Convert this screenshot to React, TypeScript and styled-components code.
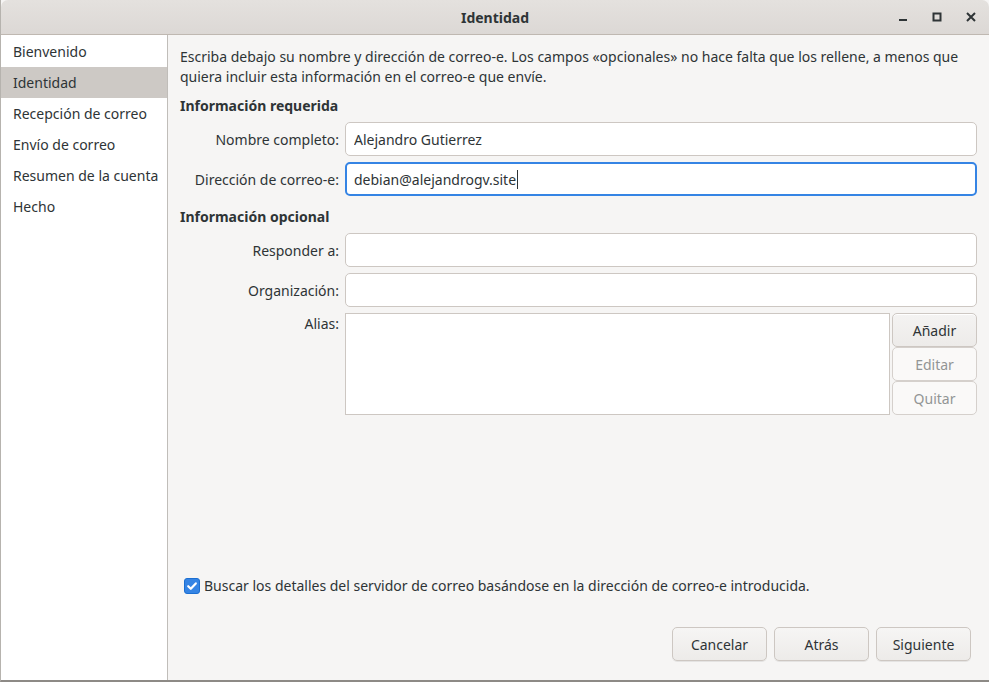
import React, { useState } from 'react';
import styled, { createGlobalStyle } from 'styled-components';

const steps = [
  'Bienvenido',
  'Identidad',
  'Recepción de correo',
  'Envío de correo',
  'Resumen de la cuenta',
  'Hecho',
];

const App = () => {
  const [checked, setChecked] = useState(true);

  return (
    <>
      <GlobalStyle />
      <Window>
        <TitleBar>
          <Title>Identidad</Title>
          <Controls>
            <Control aria-label='Minimizar'>
              <svg width='10' height='10' viewBox='0 0 10 10'>
                <rect x='1' y='7' width='8' height='2' fill='#2e3436' />
              </svg>
            </Control>
            <Control aria-label='Maximizar'>
              <svg width='10' height='10' viewBox='0 0 10 10'>
                <rect x='1.5' y='1.5' width='7' height='7' fill='none' stroke='#2e3436' strokeWidth='2' />
              </svg>
            </Control>
            <Control aria-label='Cerrar'>
              <svg width='10' height='10' viewBox='0 0 10 10'>
                <path d='M1 1 L9 9 M9 1 L1 9' stroke='#2e3436' strokeWidth='2' />
              </svg>
            </Control>
          </Controls>
        </TitleBar>
        <Body>
          <Sidebar>
            {steps.map((s) => (
              <Step key={s} $active={s === 'Identidad'}>
                {s}
              </Step>
            ))}
          </Sidebar>
          <Content>
            <Intro>
              Escriba debajo su nombre y dirección de correo-e. Los campos «opcionales» no hace falta que los rellene, a
              menos que quiera incluir esta información en el correo-e que envíe.
            </Intro>
            <Heading>Información requerida</Heading>
            <Form>
              <Label>Nombre completo:</Label>
              <Field defaultValue='Alejandro Gutierrez' />
              <Label>Dirección de correo-e:</Label>
              <CaretWrap>
                <Field $focused defaultValue='debian@alejandrogv.site' />
                <Caret />
              </CaretWrap>
            </Form>
            <Heading $gap={11}>Información opcional</Heading>
            <Form>
              <Label>Responder a:</Label>
              <Field />
              <Label>Organización:</Label>
              <Field />
              <Label $top>Alias:</Label>
              <AliasRow>
                <AliasList />
                <ButtonStack>
                  <StackButton>Añadir</StackButton>
                  <StackButton disabled>Editar</StackButton>
                  <StackButton disabled>Quitar</StackButton>
                </ButtonStack>
              </AliasRow>
            </Form>
            <Spacer />
            <CheckRow onClick={() => setChecked(!checked)}>
              <Box $checked={checked}>
                {checked && (
                  <svg width='12' height='12' viewBox='0 0 12 12'>
                    <path d='M2.2 6.2 L4.8 8.8 L9.8 3.4' fill='none' stroke='#fff' strokeWidth='2.2' strokeLinecap='round' strokeLinejoin='round' />
                  </svg>
                )}
              </Box>
              Buscar los detalles del servidor de correo basándose en la dirección de correo-e introducida.
            </CheckRow>
            <Footer>
              <Button>Cancelar</Button>
              <Button>Atrás</Button>
              <Button>Siguiente</Button>
            </Footer>
          </Content>
        </Body>
      </Window>
    </>
  );
};

export default App;

// styled
const GlobalStyle = createGlobalStyle`
  html, body {
    margin: 0;
    padding: 0;
    background: #f6f5f4;
  }
  body {
    font-family: 'Noto Sans', 'DejaVu Sans', sans-serif;
    font-size: 14px;
    color: #2e3436;
  }
`;

const Window = styled.div`
  width: 989px;
  height: 682px;
  display: flex;
  flex-direction: column;
  box-sizing: border-box;
  border-left: 1px solid #b6b3ae;
  border-bottom: 2px solid #8d8a86;
  background: #f6f5f4;
  overflow: hidden;
`;

const TitleBar = styled.div`
  height: 34px;
  flex: none;
  display: flex;
  align-items: center;
  justify-content: center;
  position: relative;
  background: linear-gradient(#e4e1de, #dcd8d5);
  border-bottom: 1px solid #bfb8b1;
  border-radius: 7px 7px 0 0;
`;

const Title = styled.div`
  font-weight: bold;
  font-size: 14px;
  color: #2e3436;
`;

const Controls = styled.div`
  position: absolute;
  right: 6px;
  top: 0;
  height: 34px;
  display: flex;
  align-items: center;
  gap: 10px;
`;

const Control = styled.div`
  width: 24px;
  height: 24px;
  display: flex;
  align-items: center;
  justify-content: center;
`;

const Body = styled.div`
  flex: 1;
  display: flex;
  min-height: 0;
`;

const Sidebar = styled.div`
  width: 166px;
  flex: none;
  padding-top: 1px;
  background: #fff;
  border-right: 1px solid #c0bdb9;
`;

const Step = styled.div<{ $active?: boolean }>`
  height: 31px;
  line-height: 31px;
  padding-left: 12px;
  white-space: nowrap;
  background: ${(p) => (p.$active ? '#cdc9c5' : 'transparent')};
`;

const Content = styled.div`
  flex: 1;
  display: flex;
  flex-direction: column;
  padding: 12px 12px 19px 12px;
  min-width: 0;
`;

const Intro = styled.p`
  margin: 0;
  line-height: 20px;
`;

const Heading = styled.div<{ $gap?: number }>`
  font-weight: bold;
  line-height: 20px;
  margin-top: ${(p) => p.$gap ?? 9}px;
  margin-bottom: 6px;
`;

const Form = styled.div`
  display: grid;
  grid-template-columns: 159px 1fr;
  column-gap: 6px;
  row-gap: 6px;
`;

const Label = styled.label<{ $top?: boolean }>`
  text-align: right;
  align-self: ${(p) => (p.$top ? 'start' : 'center')};
  padding-top: ${(p) => (p.$top ? '1px' : '0')};
  white-space: nowrap;
`;

const Field = styled.input<{ $focused?: boolean }>`
  width: 100%;
  height: 34px;
  box-sizing: border-box;
  font: inherit;
  color: #2e3436;
  background: #fff;
  border: ${(p) => (p.$focused ? '2px solid #3584e4' : '1px solid #cdc7c2')};
  border-radius: 5px;
  outline: none;
  padding: 0 8px 0 ${(p) => (p.$focused ? '7px' : '8px')};
`;

const CaretWrap = styled.div`
  position: relative;
  display: flex;
`;

const Caret = styled.span`
  position: absolute;
  left: 172px;
  top: 8px;
  width: 1px;
  height: 19px;
  background: #2e3436;
`;

const AliasRow = styled.div`
  display: flex;
  gap: 2px;
`;

const AliasList = styled.div`
  flex: 1;
  height: 102px;
  box-sizing: border-box;
  background: #fff;
  border: 1px solid #cdc7c2;
`;

const ButtonStack = styled.div`
  width: 85px;
  display: flex;
  flex-direction: column;
`;

const StackButton = styled.button`
  height: 34px;
  font: inherit;
  color: #2e3436;
  border: 1px solid #cdc7c2;
  border-radius: 5px;
  background: linear-gradient(#f4f3f2, #edebe9);
  box-shadow: inset 0 1px #fff;
  &:disabled {
    color: #929595;
    background: #faf9f8;
    box-shadow: none;
    border-color: #d5d0cc;
  }
`;

const Spacer = styled.div`
  flex: 1;
`;

const CheckRow = styled.div`
  display: flex;
  align-items: center;
  gap: 4px;
  padding-left: 4px;
  line-height: 20px;
  cursor: default;
`;

const Box = styled.div<{ $checked: boolean }>`
  width: 16px;
  height: 16px;
  box-sizing: border-box;
  border-radius: 3px;
  display: flex;
  align-items: center;
  justify-content: center;
  background: ${(p) => (p.$checked ? '#3584e4' : '#fff')};
  border: 1px solid ${(p) => (p.$checked ? '#1c6fd1' : '#cdc7c2')};
`;

const Footer = styled.div`
  display: flex;
  justify-content: flex-end;
  gap: 7px;
  margin-top: 31px;
  padding-right: 6px;
`;

const Button = styled.button`
  width: 95px;
  height: 34px;
  font: inherit;
  color: #2e3436;
  border: 1px solid #cdc7c2;
  border-radius: 5px;
  background: linear-gradient(#f6f5f4, #edebe9);
  box-shadow: 0 1px rgba(0, 0, 0, 0.07);
`;
